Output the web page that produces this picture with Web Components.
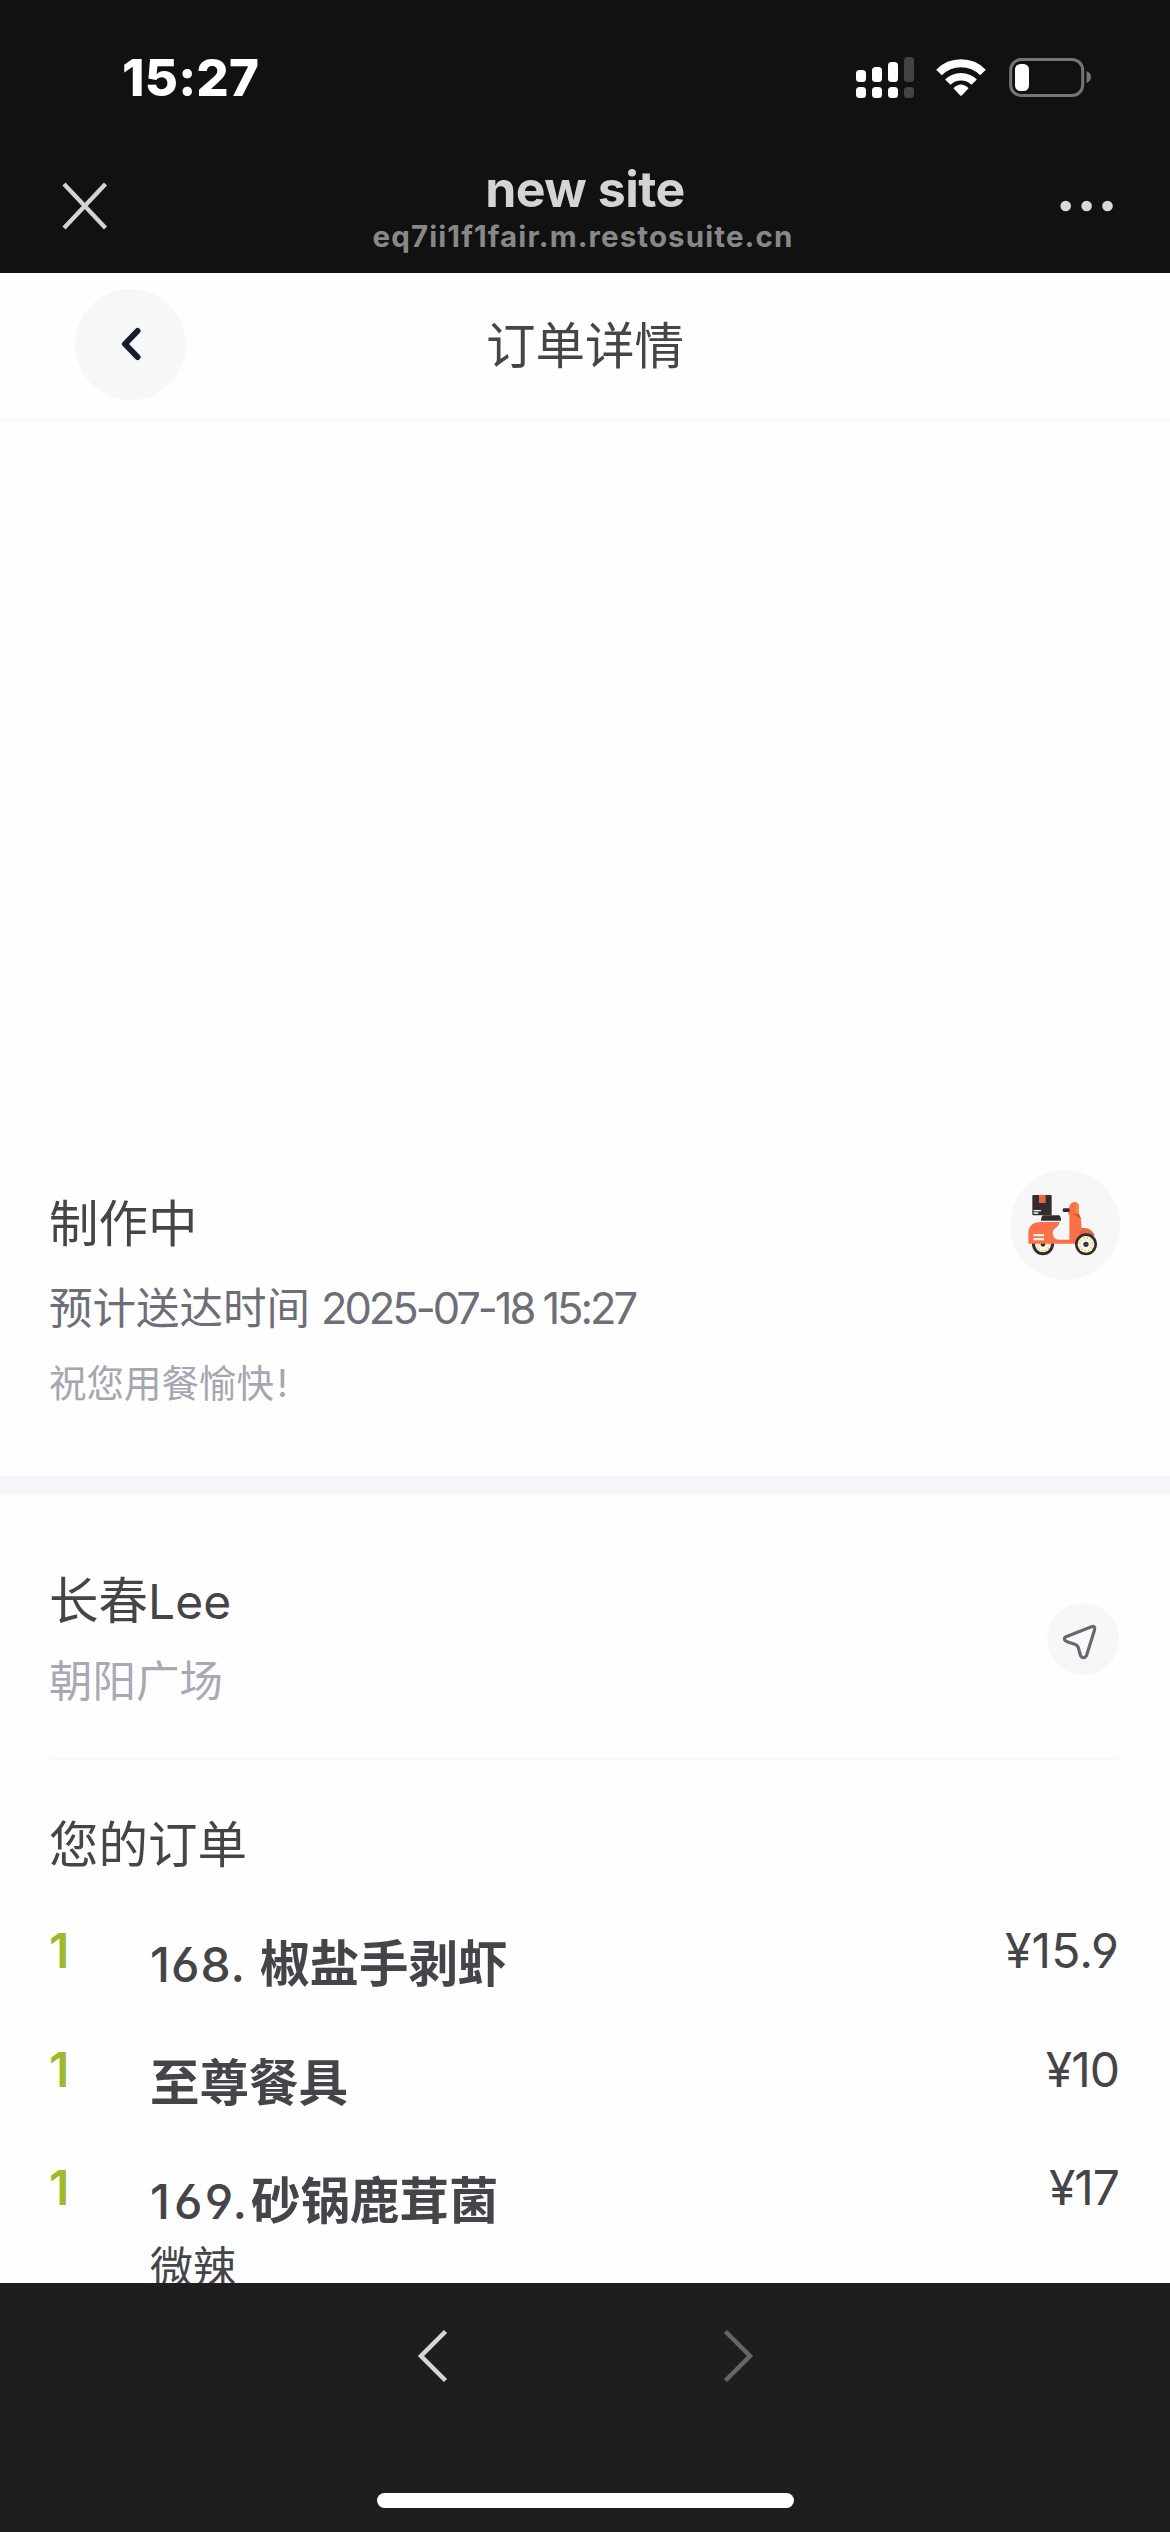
<!DOCTYPE html>
<html lang="zh-CN">
<head>
<meta charset="utf-8">
<meta name="viewport" content="width=device-width">
<title>订单详情</title>
<style>
  html, body { margin: 0; padding: 0; }
  body {
    width: 1170px;
    height: 2532px;
    overflow: hidden;
    background: #fefefe;
    color: #444449;
    font-family: Inter, "Noto Sans CJK SC", sans-serif;
    font-feature-settings: "ss01";
  }
  .latin { letter-spacing: 0; font-size: 48px; }
  .mark { margin-left: 3px; }
  .no { font-weight: 500; font-size: 48px; letter-spacing: 1px; }
  .no.wide { letter-spacing: 4px; }
</style>
</head>
<body>
<app-screen>
  <status-bar slot="top" time="15:27"></status-bar>
  <browser-bar slot="top" url="eq7ii1f1fair.m.restosuite.cn">new site</browser-bar>

  <page-nav>订单详情</page-nav>
  <order-status>
    制作中
    <span slot="label">预计送达时间</span>
    <span slot="time">2025-07-18 15:27</span>
    <span slot="note">祝您用餐愉快<span class="mark">!</span></span>
  </order-status>
  <address-card>
    长春<span class="latin">Lee</span>
    <span slot="address">朝阳广场</span>
  </address-card>
  <order-list heading="您的订单">
    <order-item qty="1" price="¥15.9"><span class="no">168.&nbsp;</span>椒盐手剥虾</order-item>
    <order-item qty="1" price="¥10">至尊餐具</order-item>
    <order-item qty="1" price="¥17"><span class="no wide">169.</span>砂锅鹿茸菌<span slot="option">微辣</span></order-item>
  </order-list>

  <browser-toolbar slot="bottom"></browser-toolbar>
</app-screen>

<script>
(() => {
  // Gives an element an open shadow root filled with the markup.
  const render = (el, html) => {
    el.attachShadow({ mode: "open" }).innerHTML = html;
  };

  class AppScreen extends HTMLElement {
    constructor() {
      super();
      render(this, `
        <style>
          :host {
            display: grid;
            grid-template-rows: 273px 2010px 249px;
            width: 1170px;
            height: 2532px;
          }
          header { background: #111; overflow: hidden; }
          main { overflow: hidden; }
          footer { background: #1e1e1e; }
        </style>
        <header><slot name="top"></slot></header>
        <main><slot></slot></main>
        <footer><slot name="bottom"></slot></footer>
      `);
    }
  }

  class StatusBar extends HTMLElement {
    constructor() {
      super();
      render(this, `
        <style>
          :host {
            display: flex;
            justify-content: space-between;
            box-sizing: border-box;
            height: 141px;
            padding: 48px 78px 0 122px;
            color: #fff;
          }
          time { font: 800 51px/60px Inter, sans-serif; letter-spacing: .2px; }
          svg { display: block; margin-top: 4px; }
        </style>
        <time>${this.getAttribute("time")}</time>
        <svg width="238" height="52" viewBox="854 52 238 52">
          <g fill="#fff">
            <rect x="856" y="70" width="10" height="12" rx="3.5"/>
            <rect x="872" y="67" width="10" height="15" rx="3.5"/>
            <rect x="888" y="62" width="10" height="20" rx="3.5"/>
            <rect x="856" y="87" width="10" height="11" rx="3.5"/>
            <rect x="872" y="87" width="10" height="11" rx="3.5"/>
            <rect x="888" y="87" width="10" height="11" rx="3.5"/>
          </g>
          <g fill="#444">
            <rect x="904" y="57" width="10" height="25" rx="3.5"/>
            <rect x="904" y="87" width="10" height="11" rx="3.5"/>
          </g>
          <g fill="none" stroke="#fff">
            <path d="M939 72.5A31 31 0 0 1 983 72.5" stroke-width="8"/>
            <path d="M947.8 82.2A18.5 18.5 0 0 1 974.2 82.2" stroke-width="7.5"/>
          </g>
          <path d="M953.5 88.3Q961 80.8 968.5 88.3L961.8 95.4Q961 96.2 960.2 95.4Z" fill="#fff"/>
          <rect x="1010.7" y="59.5" width="72" height="36" rx="10.5" fill="none" stroke="#757575" stroke-width="3"/>
          <rect x="1015" y="64" width="14" height="27" rx="5.5" fill="#fff"/>
          <path d="M1086.5 71Q1091 73 1091 77T1086.5 83Z" fill="#757575"/>
        </svg>
      `);
    }
  }

  class BrowserBar extends HTMLElement {
    constructor() {
      super();
      render(this, `
        <style>
          :host {
            display: grid;
            grid-template-columns: 200px 1fr 200px;
            box-sizing: border-box;
            height: 132px;
            padding-top: 18px;
          }
          .center { text-align: center; }
          .title { font: 700 50px/60px Inter, sans-serif; color: #d4d4d4; letter-spacing: -.5px; }
          .url { margin-right: 4px; font: 700 29.500px/34px Inter, sans-serif; color: #888; letter-spacing: 1.1px; }
          svg { display: block; margin-top: 19px; }
          .more { margin-left: auto; }
        </style>
        <svg width="120" height="56" viewBox="0 178 120 56">
          <path d="M64 184L105.500 228M105.500 184L64 228" fill="none" stroke="#d4d4d4" stroke-width="4.300"/>
        </svg>
        <div class="center">
          <div class="title"><slot></slot></div>
          <div class="url">${this.getAttribute("url")}</div>
        </div>
        <svg class="more" width="120" height="56" viewBox="1050 178 120 56" fill="#d8d8d8">
          <circle cx="1065.700" cy="206" r="5.300"/>
          <circle cx="1086.600" cy="206" r="5.300"/>
          <circle cx="1107.500" cy="206" r="5.300"/>
        </svg>
      `);
    }
  }

  class PageNav extends HTMLElement {
    constructor() {
      super();
      render(this, `
        <style>
          :host {
            display: grid;
            grid-template-columns: 200px 1fr 200px;
            align-items: center;
            box-sizing: border-box;
            height: 148px;
            border-bottom: 4px solid #fafafa;
            background: #fefefe;
          }
          button {
            display: grid;
            place-items: center;
            width: 111px;
            height: 111px;
            margin: 0 0 1px 75px;
            padding: 0;
            border: 0;
            border-radius: 50%;
            background: linear-gradient(#f7f7f7, #f6f8f9 70%, #f7f7f8);
          }
          button svg { margin-bottom: 2px; }
          h1 { margin: 2px 0 0; font-size: 49.500px; font-weight: 400; line-height: 60px; text-align: center; }
        </style>
        <button aria-label="返回">
          <svg width="24" height="36" viewBox="0 0 24 36">
            <path d="M18.500 5L6 18L18.500 31" fill="none" stroke="#171b2c" stroke-width="6" stroke-linecap="round" stroke-linejoin="round"/>
          </svg>
        </button>
        <h1><slot></slot></h1>
      `);
    }
  }

  class OrderStatus extends HTMLElement {
    constructor() {
      super();
      render(this, `
        <style>
          :host {
            display: flex;
            justify-content: space-between;
            align-items: flex-start;
            box-sizing: border-box;
            height: 1073px;
            padding: 749px 50px 0 49px;
            border-bottom: 18px solid #f5f6f9;
          }
          .text { padding-top: 24px; }
          .state { font-size: 49.500px; line-height: 60px; }
          .eta {
            display: flex;
            gap: 11px;
            margin-top: 27px;
            font-size: 43.500px;
            line-height: 54px;
            color: #6e6e78;
          }
          ::slotted([slot="time"]) { letter-spacing: -3.050px; }
          .note { margin-top: 26px; font-size: 37.500px; line-height: 46px; color: #a6a6b0; }
        </style>
        <div class="text">
          <div class="state"><slot></slot></div>
          <div class="eta"><slot name="label"></slot><slot name="time"></slot></div>
          <div class="note"><slot name="note"></slot></div>
        </div>
        <svg width="110" height="110" viewBox="92 90 330 330">
          <circle cx="257" cy="255" r="165" fill="#f7f7f8"/>
          <rect x="159" y="165" width="58" height="61" rx="3" fill="#302d2c"/>
          <path d="M179 165h20v24h-20z" fill="#ed6341"/>
          <path d="M163 210h22v4h-22zM163 217h14v4h-14z" fill="#fff"/>
          <circle cx="191" cy="313" r="33" fill="#302d2c"/>
          <circle cx="191" cy="313" r="24" fill="#fff6df"/>
          <circle cx="191" cy="313" r="19" fill="none" stroke="#d8b96c" stroke-width="5" stroke-dasharray="3 7"/>
          <circle cx="191" cy="313" r="7" fill="#302d2c"/>
          <path d="M147 311V281Q147 247 184 246H241Q239 258 226 266Q218 271 221 284Q223 297 238 299H270V226Q265 222 269 203Q272 187 286 186Q299 187 299 200V222Q306 236 307 264Q334 261 346 286L292 311Z" fill="#fb7048"/>
          <path d="M275 222H299Q304 231 305 239Q293 224 275 222Z" fill="#c9563d"/>
          <path d="M307 264Q334 261 346 286H299Z" fill="#df6845"/>
          <path d="M289 187Q299 189 299 200V222L289 220Z" fill="#ff8b3d"/>
          <rect x="250" y="205" width="21" height="11" rx="4" fill="#302d2c"/>
          <path d="M192 226H239Q245 228 245 242H185Q185 230 192 226Z" fill="#302d2c"/>
          <path d="M162 282h32v7h-32zM162 294h32v7h-32z" fill="#fff2e8"/>
          <circle cx="320" cy="313" r="33" fill="#302d2c"/>
          <circle cx="320" cy="313" r="25" fill="#fff8e5"/>
          <circle cx="320" cy="313" r="19" fill="none" stroke="#d8b94c" stroke-width="5" stroke-dasharray="3 7"/>
          <circle cx="320" cy="313" r="8" fill="#2d3850"/>
        </svg>
      `);
    }
  }

  class AddressCard extends HTMLElement {
    constructor() {
      super();
      render(this, `
        <style>
          :host {
            display: flex;
            justify-content: space-between;
            align-items: flex-start;
            box-sizing: border-box;
            height: 266px;
            margin: 0 51px 0 49px;
            padding-top: 76px;
            border-bottom: 3px solid #f8f8f9;
          }
          .name { margin-top: 1px; font-size: 49.500px; line-height: 60px; }
          .address { margin-top: 22px; font-size: 43.500px; line-height: 54px; color: #a9a9b4; }
          svg { display: block; margin-top: 33px; }
        </style>
        <div>
          <div class="name"><slot></slot></div>
          <div class="address"><slot name="address"></slot></div>
        </div>
        <svg width="72" height="72" viewBox="1048 1602.500 72 72">
          <circle cx="1084" cy="1638.500" r="36" fill="#f7f7f8"/>
          <path d="M1067 1636.200L1092.500 1626.200Q1096.500 1625 1095.500 1629.500L1087.500 1655Q1084.500 1659.500 1081.500 1655L1079.200 1646.700Q1078.500 1644.700 1076.500 1644L1067.500 1641Q1063.500 1638.500 1067 1636.200Z" fill="#fafafc" stroke="#686871" stroke-width="3.200" stroke-linejoin="round"/>
        </svg>
      `);
    }
  }

  class OrderList extends HTMLElement {
    constructor() {
      super();
      render(this, `
        <style>
          :host { display: block; padding: 55px 51px 0 49px; }
          h2 { margin: 0 0 46px; font-size: 49.500px; font-weight: 400; line-height: 60px; }
        </style>
        <h2>${this.getAttribute("heading")}</h2>
        <slot></slot>
      `);
    }
  }

  class OrderItem extends HTMLElement {
    constructor() {
      super();
      const price = this.getAttribute("price");
      render(this, `
        <style>
          :host {
            display: grid;
            grid-template-columns: 101px 1fr auto;
            min-height: 118.500px;
            font-size: 48px;
            line-height: 60px;
          }
          .qty { color: #a0b82c; font-weight: 600; }
          .name { padding-top: 13px; font-size: 49.500px; font-weight: 600; }
          .option { margin-top: 8px; font-size: 43px; line-height: 54px; }
          .price { letter-spacing: -1px; }
          .price.decimal { letter-spacing: .2px; }
        </style>
        <div class="qty">${this.getAttribute("qty")}</div>
        <div>
          <div class="name"><slot></slot></div>
          <div class="option"><slot name="option"></slot></div>
        </div>
        <div class="price${price.includes(".") ? " decimal" : ""}">${price}</div>
      `);
    }
  }

  class BrowserToolbar extends HTMLElement {
    constructor() {
      super();
      render(this, `
        <style>
          :host {
            display: flex;
            flex-direction: column;
            align-items: center;
            justify-content: space-between;
            box-sizing: border-box;
            height: 249px;
            padding: 43px 0 24px;
          }
          nav { display: flex; justify-content: space-between; width: 341px; }
          svg { display: block; }
          .home { width: 417px; height: 15px; border-radius: 8px; background: #fff; }
        </style>
        <nav>
          <svg width="36" height="60" viewBox="0 0 36 60">
            <path d="M30.500 5.500L6 30L30.500 54.500" fill="none" stroke="#d6d6d6" stroke-width="4.500"/>
          </svg>
          <svg width="36" height="60" viewBox="0 0 36 60">
            <path d="M5.500 5.500L30 30L5.500 54.500" fill="none" stroke="#666" stroke-width="4.500"/>
          </svg>
        </nav>
        <div class="home"></div>
      `);
    }
  }

  customElements.define("app-screen", AppScreen);
  customElements.define("status-bar", StatusBar);
  customElements.define("browser-bar", BrowserBar);
  customElements.define("page-nav", PageNav);
  customElements.define("order-status", OrderStatus);
  customElements.define("address-card", AddressCard);
  customElements.define("order-list", OrderList);
  customElements.define("order-item", OrderItem);
  customElements.define("browser-toolbar", BrowserToolbar);
})();
</script>
</body>
</html>
